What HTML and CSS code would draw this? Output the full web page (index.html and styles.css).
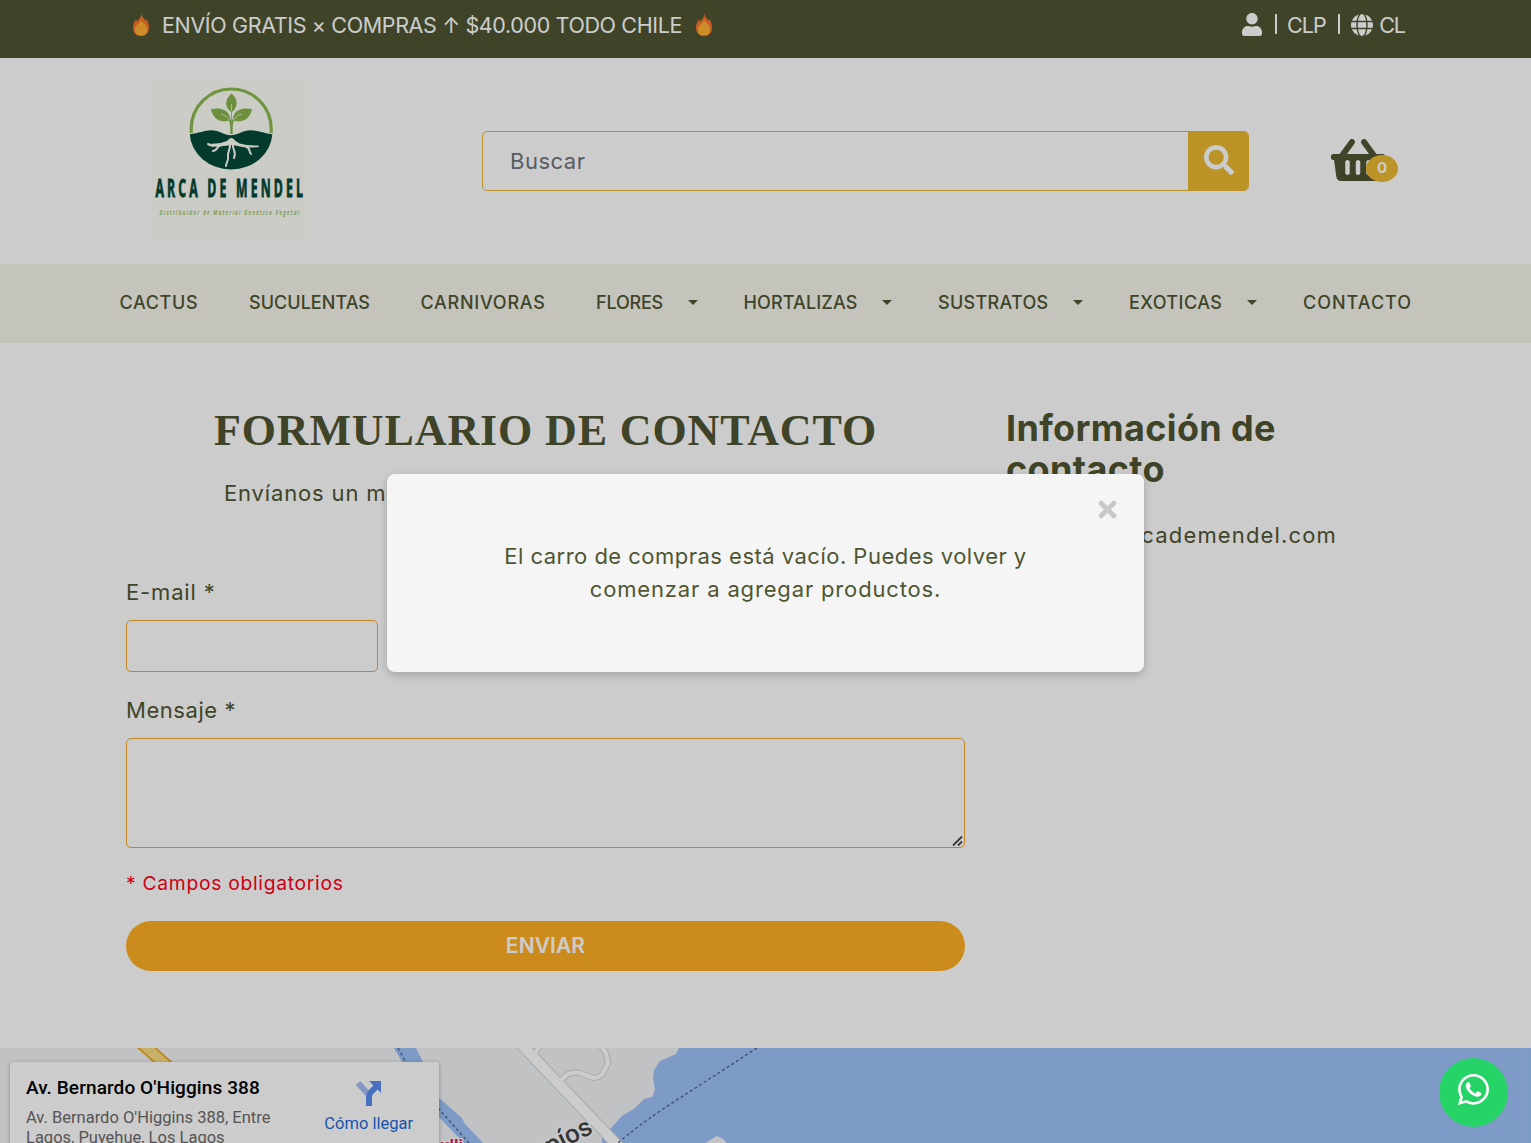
FILE: index.html
```
<!DOCTYPE html>
<html lang="es">
<head>
<meta charset="utf-8">
<title>Contacto - Arca de Mendel</title>
<link rel="stylesheet" href="styles.css">
</head>
<body>
<svg class="defs" width="0" height="0">
  <symbol id="flame" viewBox="0 0 16 22"><path fill="#f8742c" d="M8.500 0C9 3 11 4 12 6.500c.8-.4 1-1 1-1.800C15 7 16 10.500 16 13.500c0 5-3 8.500-8 8.500s-8-3.500-8-8.500C0 10.500 1.500 8 2.500 5.500c1 .7 1.300 1.300 1.500 2C6 5.500 8 3.500 8.500 0z"/><path fill="#ffb031" d="M8.200 6c1 2.500 6 5 6 10 0 3.500-2.600 5.500-6.200 5.500S1.800 19.500 1.800 16c0-5 5.400-7 6.400-10z"/></symbol>
</svg>

<div class="topbar">
  <div class="promo"><svg class="flame"><use href="#flame"/></svg><span class="promo-text">ENVÍO GRATIS × COMPRAS ↑ $40.000 TODO CHILE</span><svg class="flame"><use href="#flame"/></svg></div>
  <div class="account">
    <svg class="user" viewBox="0 0 448 512"><path d="M224 256c70.700 0 128-57.300 128-128S294.700 0 224 0 96 57.300 96 128s57.300 128 128 128zm89.600 32h-16.700c-22.200 10.200-46.900 16-72.900 16s-50.600-5.800-72.900-16h-16.700C60.200 288 0 348.200 0 422.400V464c0 26.500 21.500 48 48 48h352c26.500 0 48-21.500 48-48v-41.600c0-74.200-60.200-134.400-134.400-134.400z"/></svg>
    <i class="bar"></i><span class="clp">CLP</span><i class="bar"></i>
    <svg class="globe" viewBox="0 8 496 496"><path d="M336.500 160C322 70.700 287.800 8 248 8s-74 62.700-88.500 152h177zM152 256c0 22.200 1.200 43.500 3.300 64h185.300c2.100-20.500 3.300-41.800 3.300-64s-1.200-43.500-3.300-64H155.300c-2.100 20.500-3.300 41.800-3.300 64zm324.700-96c-28.600-67.900-86.500-120.400-158-141.600 24.400 33.800 41.200 84.700 50 141.600h108zM177.200 18.400C105.800 39.600 47.800 92.100 19.300 160h108c8.700-56.900 25.500-107.800 49.900-141.600zM487.400 192H372.700c2.100 21 3.300 42.500 3.300 64s-1.200 43-3.300 64h114.600c5.500-20.500 8.600-41.800 8.600-64s-3.100-43.500-8.500-64zM120 256c0-21.500 1.200-43 3.300-64H8.600C3.200 212.500 0 233.800 0 256s3.200 43.500 8.600 64h114.600c-2-21-3.200-42.500-3.200-64zm39.500 96c14.500 89.300 48.700 152 88.500 152s74-62.700 88.500-152h-177zm159.300 141.600c71.400-21.200 129.400-73.700 158-141.600h-108c-8.800 56.900-25.600 107.800-50 141.600zM19.300 352c28.600 67.900 86.500 120.400 158 141.600-24.400-33.800-41.200-84.700-50-141.600h-108z"/></svg>
    <span class="clp">CL</span>
  </div>
</div>

<header class="header">
  <svg class="logo" viewBox="-1 0 164 164">
    <rect x="-1" y="1" width="161" height="161" fill="#fefff7"/>
    <path d="M41.200 55V51a40 40 0 0 1 80 0v4" fill="none" stroke="#8cbb50" stroke-width="3.200"/>
    <path d="M39.800 56c9-1 15-4 21-4 9 0 13 5 20 5s12-5 20-5c7 0 13 3 21.500 4a41.300 36.500 0 0 1-82.500 0z" transform="translate(0 -.6) scale(1 1.015)" fill="#04493a"/>
    <path d="M80.200 56c.3-5 .2-10-1.200-13.500-3 1.500-15.500 2.500-18-11.500 9-1.500 17.500 0 19.200 9.500.5 1 .8 2 1 3V34c-7-5-6.500-13 .3-18.500 6.800 5.500 7 13.500.4 18.500v9.500c.2-1 .5-2 1-3C84.600 31 93 29.500 102 31c-2.500 14-15 13-18 11.500-1.500 3.500-1.500 8.500-1.200 13.500z" fill="#87b54c"/>
    <path d="M71 36c4 1 6.500 3 8.500 6M92 36c-4 1-6.500 3-8.500 6M81.500 26v7" fill="none" stroke="#fefff7" stroke-width=".7"/>
    <path d="M77 63q4.500-6 8.500 0l4 2.500q8 2.500 19 2l.3 1.500q-12 1.500-21-1l-5-1-9 1q-9 2-16-1l.3-1.500q11 1 18.900-2.500z" fill="#fefff7"/>
    <g fill="none" stroke="#fefff7" stroke-width="2" stroke-linecap="round"><path d="M80 64c1 8-3 10-2 15 1 4-2 5-2 9M83 66c-1 6 4 7 1 14M72 66c-6 2-3 6-9 7M95 68c6 2 3 4 6 8"/><path d="M65 67c-4 2-5 0-7-1"/></g>
    <g transform="translate(5.500 119.300) scale(.5 1)"><text class="brand" textLength="295">ARCA DE MENDEL</text></g>
    <g transform="translate(9.500 137) scale(.62 1)"><text class="tag" textLength="225">Distribuidor de Material Genético Vegetal</text></g>
  </svg>
  <form class="search"><span class="search-text">Buscar</span><span class="search-btn"><svg viewBox="0 0 512 512"><path d="M505 442.700L405.300 343c-4.500-4.500-10.600-7-17-7H372c27.600-35.300 44-79.700 44-128C416 93.100 322.900 0 208 0S0 93.100 0 208s93.100 208 208 208c48.300 0 92.700-16.400 128-44v16.300c0 6.400 2.500 12.500 7 17l99.700 99.700c9.400 9.400 24.600 9.400 33.900 0l28.300-28.300c9.400-9.400 9.400-24.600.1-34zM208 336c-70.700 0-128-57.200-128-128 0-70.700 57.200-128 128-128 70.700 0 128 57.200 128 128 0 70.700-57.200 128-128 128z"/></svg></span></form>
  <div class="cart">
    <svg viewBox="0 0 576 512"><path d="M576 216v16c0 13.255-10.745 24-24 24h-8l-26.113 182.788C514.509 462.435 494.257 480 470.370 480H105.630c-23.887 0-44.139-17.565-47.518-41.212L32 256h-8c-13.255 0-24-10.745-24-24v-16c0-13.255 10.745-24 24-24h67.341l106.780-146.821c10.395-14.292 30.407-17.453 44.701-7.058 14.293 10.395 17.453 30.408 7.058 44.701L170.477 192h235.046L326.120 82.821c-10.395-14.292-7.234-34.306 7.059-44.701 14.291-10.395 34.306-7.235 44.701 7.058L484.659 192H552c13.255 0 24 10.745 24 24zM312 392V280c0-13.255-10.745-24-24-24s-24 10.745-24 24v112c0 13.255 10.745 24 24 24s24-10.745 24-24zm112 0V280c0-13.255-10.745-24-24-24s-24 10.745-24 24v112c0 13.255 10.745 24 24 24s24-10.745 24-24zm-224 0V280c0-13.255-10.745-24-24-24s-24 10.745-24 24v112c0 13.255 10.745 24 24 24s24-10.745 24-24z"/></svg>
    <span class="count">0</span>
  </div>
</header>

<nav class="nav">
  <a class="s5">CACTUS</a><a class="s0">SUCULENTAS</a><a class="s7">CARNIVORAS</a>
  <a class="drop sn">FLORES</a><a class="drop s1">HORTALIZAS</a><a class="drop s3">SUSTRATOS</a><a class="drop s4">EXOTICAS</a><a class="s9">CONTACTO</a>
</nav>

<main class="main">
  <section class="form">
    <h1>FORMULARIO DE CONTACTO</h1>
    <p class="intro">Envíanos un mensaje con tus dudas o comentarios.</p>
    <label class="mail-label">E-mail *</label>
    <div class="field mail"></div>
    <label class="msg-label">Mensaje *</label>
    <div class="field msg"><svg viewBox="0 0 11 11"><path d="M1 10.500L10 1.500M6 10.500L10 6.500"/></svg></div>
    <p class="required">* Campos obligatorios</p>
    <button class="send">ENVIAR</button>
  </section>
  <aside class="info">
    <h2>Información de contacto</h2>
    <p>ventas@arcademendel.com</p>
  </aside>
</main>

<section class="map">
  <svg class="map-art" width="1531" height="95">
    <rect width="1531" height="95" fill="#f1f3f4"/>
    <path fill="#9ec1f8" d="M679 0l-3 6-16 7-6 9-1 8 2 12-3 7-8 2-9 9-13 8-11 12-9 10v5h103l12-7 6 3 4 4H1531V0z"/>
    <path fill="#9ec1f8" d="M394 0h22l8 16 15 34 23 20 3 6 18 19h-19l-28-29-30-45z"/>
    <path d="M817.500 0v95M1169.500 0v95M1520.500 0v95" stroke="#a5c6f9"/>
    <path d="M139 -7l35 31" stroke="#f0a91c" stroke-width="13"/><path d="M139 -7l35 31" stroke="#fbdd85" stroke-width="9.500"/>
    <g fill="none" stroke-linejoin="round">
      <path d="M560 33l8-7q4-2 12-1l14 5q7-1 9-5l5-10-2-10-5-7M534 7l6-9" stroke="#d8dadc" stroke-width="6.500"/>
      <path d="M517 -8L622 102" stroke="#d3d5d7" stroke-width="12"/>
      <path d="M560 33l8-7q4-2 12-1l14 5q7-1 9-5l5-10-2-10-5-7M534 7l6-9" stroke="#fff" stroke-width="4"/>
      <path d="M517 -8L622 102" stroke="#fff" stroke-width="10"/>
      <path d="M757 0L663 61Q635 80 618 95M398 0l8 15M438 60l31 35" stroke="#4c6187" stroke-width="1.300" stroke-dasharray="3 2.500"/>
    </g>
    <text class="road" transform="translate(550 107) rotate(-27)">píos</text>
    <text class="poi" x="463" y="103" text-anchor="end">ulli</text>
  </svg>
  <div class="place">
    <div class="place-text"><strong>Av. Bernardo O'Higgins 388</strong><span>Av. Bernardo O'Higgins 388, Entre<br>Lagos, Puyehue, Los Lagos</span></div>
    <div class="route"><svg viewBox="0 0 26 26"><path d="M2 3l10 11" stroke="#a3bdf3" stroke-width="6"/><path d="M13 26V17q0-3 2-5l6-6" fill="none" stroke="#5a8cf0" stroke-width="6"/><path d="M13 1h12v12z" fill="#5a8cf0"/></svg><span>Cómo llegar</span></div>
  </div>
</section>

<div class="overlay">
  <div class="modal">
    <svg class="close" viewBox="0 0 18 18"><path d="M3 3l12 12M15 3L3 15"/></svg>
    <p><span class="l1">El carro de compras está vacío. Puedes volver y</span><br><span class="l2">comenzar a agregar productos.</span></p>
  </div>
</div>
<div class="whatsapp"><svg viewBox="0 32 448 448"><path d="M380.900 97.100C339 55.100 283.200 32 223.900 32c-122.400 0-222 99.600-222 222 0 39.100 10.200 77.300 29.600 111L0 480l117.700-30.900c32.400 17.700 68.900 27 106.100 27h.1c122.300 0 224.100-99.600 224.100-222 0-59.300-25.200-115-67.100-157zm-157 341.600c-33.200 0-65.700-8.900-94-25.700l-6.700-4-69.800 18.300L72 359.200l-4.400-7c-18.500-29.400-28.200-63.300-28.200-98.200 0-101.700 82.800-184.500 184.600-184.500 49.300 0 95.600 19.200 130.400 54.100 34.800 34.900 56.200 81.200 56.100 130.500 0 101.800-84.900 184.600-186.600 184.600zm101.200-138.200c-5.500-2.800-32.800-16.200-37.900-18-5.100-1.900-8.800-2.800-12.500 2.800-3.700 5.600-14.300 18-17.600 21.800-3.200 3.700-6.500 4.200-12 1.400-32.600-16.300-54-29.100-75.500-66-5.700-9.800 5.700-9.100 16.300-30.300 1.800-3.700.9-6.900-.5-9.700-1.400-2.800-12.500-30.100-17.100-41.200-4.500-10.800-9.100-9.300-12.500-9.500-3.200-.2-6.900-.2-10.600-.2-3.700 0-9.700 1.400-14.800 6.900-5.100 5.600-19.400 19-19.400 46.300 0 27.300 19.900 53.700 22.600 57.400 2.800 3.700 39.100 59.700 94.800 83.800 35.200 15.200 49 16.500 66.600 13.900 10.700-1.600 32.800-13.400 37.400-26.400 4.600-13 4.600-24.100 3.200-26.400-1.300-2.500-5-3.900-10.500-6.600z"/></svg></div>
</body>
</html>
```
FILE: styles.css
```
* { box-sizing: border-box; }
body { margin: 0; height: 1143px; overflow: hidden; background: #fff; color: #4f5632; font: 22px/33px Inter, sans-serif; }
h1, h2, p { margin: 0; }
svg { display: block; flex: none; }
.defs { position: absolute; }

.topbar { height: 58px; padding: 0 126px 8px 133px; background: #4f5632; color: #fff; font-size: 21.500px; display: flex; justify-content: space-between; align-items: center; }
.promo, .account { display: flex; align-items: center; white-space: nowrap; }
.flame { width: 16px; height: 22px; }
.promo-text { width: 520px; margin: 0 14px 0 13px; letter-spacing: -.37px; }
.account svg { fill: #fff; }
.user { width: 20px; height: 23px; margin-bottom: 1px; }
.bar { width: 2px; height: 20px; margin: 0 11px 2px 12.500px; background: #fff; }
.clp { letter-spacing: -1px; }
.globe { width: 22px; height: 22px; margin: 0 5px 1px 0; }
.bar + .clp { margin-left: -.5px; }
.bar + .globe { margin-left: 0; margin-right: 6px; }

.header { height: 206px; padding: 0 133px 0 149px; display: flex; align-items: center; }
.logo { width: 164px; height: 164px; margin: 0 169px 2px 0; }
.brand { font: 700 24.500px "Open Sans", sans-serif; fill: #04493a; stroke: #04493a; stroke-width: .9px; }
.tag { font: italic 600 7.500px "Open Sans", sans-serif; fill: #87b54c; }
.search { width: 767px; height: 60px; border: 1px solid #eab831; border-radius: 5px; display: flex; justify-content: space-between; overflow: hidden; }
.search-text { padding-left: 27px; line-height: 59px; letter-spacing: .5px; color: #6c757d; }
.search-btn { width: 60px; padding: 0 0 2px 1px; background: #eab831; display: flex; align-items: center; justify-content: center; }
.search-btn svg { width: 30px; height: 30px; fill: #fff; }
.cart { position: relative; width: 67px; height: 48px; margin: 0 0 2px 82px; }
.cart svg { width: 54px; height: 48px; fill: #4f5632; }
.count { position: absolute; left: 35px; top: 19px; width: 32px; height: 27px; border-radius: 50%; background: #eab831; color: #fff; font-weight: 700; font-size: 15px; line-height: 26px; text-align: center; }

.nav { height: 79px; padding: 0 119px 2px 119.500px; background: #f5f4eb; display: grid; grid-template-columns: 129.500px 171.500px 175.500px 147.500px 194.500px 191px 174px auto; align-items: center; font-weight: 500; font-size: 18px; white-space: nowrap; }
.nav .drop::after { content: ""; display: inline-block; margin-left: 24.500px; vertical-align: 4px; border: 5px solid transparent; border-top-color: #4f5632; border-bottom: 0; }
.s0 { letter-spacing: .04px; }
.s1 { letter-spacing: .13px; }
.s3 { letter-spacing: .3px; }
.s4 { letter-spacing: .45px; }
.s5 { letter-spacing: .65px; }
.s7 { letter-spacing: .75px; }
.s9 { letter-spacing: 1px; }
.sn { letter-spacing: -.2px; }

.main { height: 705px; padding: 65px 126px 0; display: flex; gap: 41px; }
.form { width: 839px; display: flex; flex-direction: column; }
.form h1 { font: 700 44px/46px "Liberation Serif", serif; letter-spacing: .88px; text-align: center; }
.intro { margin-top: 23px; padding-left: 98px; white-space: nowrap; letter-spacing: .85px; }
.mail-label { margin-top: 66px; letter-spacing: .85px; }
.msg-label { margin-top: 22px; letter-spacing: .55px; }
.field { border: 1px solid #f3a92c; border-radius: 5px; }
.mail { width: 252px; height: 52px; margin-top: 11px; }
.msg { height: 110px; margin-top: 11px; display: flex; justify-content: flex-end; align-items: flex-end; }
.msg svg { width: 11px; height: 11px; margin: 0 1px 1px; stroke: #444; stroke-width: 1.800; fill: none; }
.required { margin-top: 19px; color: #ff0019; font-size: 19.300px; letter-spacing: .7px; }
.send { height: 50px; margin-top: 21px; padding: 0; border: 0; border-radius: 25px; background: #ffb025; color: #fff; font: 600 21px/48px Inter, sans-serif; letter-spacing: .1px; }
.info { flex: 1; }
.info h2 { font: 700 36px/41px Inter, sans-serif; letter-spacing: .35px; }
.info p { margin-top: 29px; letter-spacing: 1.15px; width: 331px; display: flex; justify-content: flex-end; }

.map { position: relative; height: 95px; overflow: hidden; font-family: Roboto, sans-serif; }
.map-art { position: absolute; }
.road { font: 500 26px Roboto, sans-serif; fill: #424548; stroke: #fff; stroke-width: 3px; paint-order: stroke; }
.poi { font: 700 17px Roboto, sans-serif; fill: #d92b6b; stroke: #fff; stroke-width: 2px; paint-order: stroke; }
.place { position: relative; width: 429px; height: 110px; margin: 14px 0 0 10px; padding: 16px 26px 0 16px; background: #fff; border-radius: 2px; box-shadow: 0 1px 4px rgba(0,0,0,.3); display: flex; justify-content: space-between; }
.place-text { white-space: nowrap; }
.place strong { display: block; font-weight: 500; font-size: 19px; line-height: 20px; letter-spacing: .1px; color: #000; }
.place-text span { display: block; margin-top: 10px; font-size: 16.500px; line-height: 20px; color: #6b6b6b; }
.route { display: flex; flex-direction: column; align-items: center; font-size: 16.500px; line-height: 20px; color: #1a6bdb; }
.route svg { width: 26px; height: 26px; margin: 2px 0 8px; }

.overlay { position: absolute; inset: 0; background: rgba(0,0,0,.2); padding: 474px 0 0 387px; }
.modal { position: relative; width: 757px; height: 198px; padding-top: 66px; background: #f5f5f5; border-radius: 8px; box-shadow: 0 3px 8px rgba(0,0,0,.2); text-align: center; }
.modal p { white-space: nowrap; }
.l1 { letter-spacing: .48px; }
.l2 { letter-spacing: .84px; }
.close { position: absolute; right: 27px; top: 26px; width: 19px; height: 19px; stroke: #c8c8c8; stroke-width: 4.600; stroke-linecap: round; }
.whatsapp { position: absolute; left: 1439px; top: 1058px; width: 69px; height: 69px; border-radius: 50%; background: #25d366; display: flex; justify-content: center; padding-top: 16px; }
.whatsapp svg { width: 31px; height: 31px; fill: #fff; margin-right: 1px; }
```
